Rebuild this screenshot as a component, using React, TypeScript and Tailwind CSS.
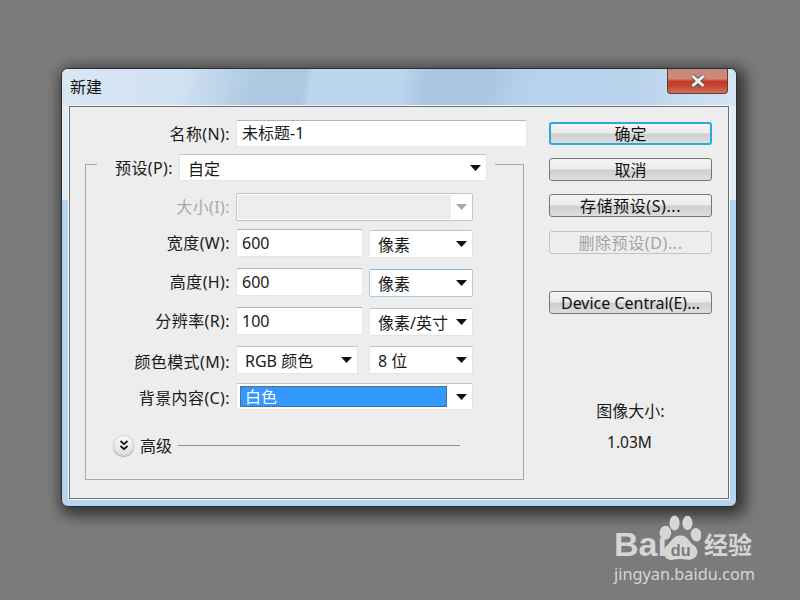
import React from 'react';

const FONT = 'font-["Noto_Sans","Noto_Sans_CJK_SC",sans-serif]';

const Arrow = ({ disabled = false }: { disabled?: boolean }) => (
  <svg width="11" height="6" viewBox="0 0 11 6" className="shrink-0">
    <path d="M0 0H11L5.5 6Z" fill={disabled ? '#a8a8a8' : '#111111'} />
  </svg>
);

const Label = ({ text, w, disabled = false, pt = '' }: { text: string; w: string; disabled?: boolean; pt?: string }) => (
  <span className={`${w} ${pt} shrink-0 self-center text-right whitespace-nowrap tracking-[0.4px] ${disabled ? 'text-[#a9a9a9]' : 'text-[#1a1a1a]'}`}>{text}</span>
);

const Input = ({ value, w, h = 'h-[28px]' }: { value: string; w: string; h?: string }) => (
  <div className={`${w} ${h} shrink-0 flex items-center pl-[5px] pb-[1px] bg-white rounded-[2px] border border-[#e6e6e6] border-t-[#b4b4b4]`}>
    {value}
  </div>
);

const Select = ({ value, w, focus = false, low = false, h = 'h-[28px]' }: { value: string; w: string; focus?: boolean; low?: boolean; h?: string }) => (
  <div
    className={`${w} ${h} ${low ? 'mt-[1px]' : ''} shrink-0 flex items-center justify-between pl-[8px] pr-[5px] bg-white rounded-[2px] border whitespace-nowrap ${
      focus ? 'border-[#a9cde6] border-t-[#84b4d6]' : 'border-[#e4e4e4] border-t-[#c4c4c4]'
    }`}
  >
    <span className="pt-[2px]">{value}</span>
    <Arrow />
  </div>
);

const Button = ({ text, mt, primary = false, disabled = false, spaced = false }: { text: string; mt: string; primary?: boolean; disabled?: boolean; spaced?: boolean }) => (
  <div
    className={`${mt} w-[163px] h-[23px] flex items-center justify-center rounded-[3px] whitespace-nowrap ${spaced ? 'tracking-[0.6px] pt-[1px]' : ''} ${
      disabled
        ? 'border border-[#c4c4c4] bg-[#ededed] text-[#a3a3a3]'
        : primary
        ? 'border-2 border-[#2fa9d9] bg-[linear-gradient(to_bottom,#f4f4f4_0%,#ececec_45%,#cfcfcf_55%,#dedede_100%)] text-[#111]'
        : 'border border-[#777] bg-[linear-gradient(to_bottom,#f4f4f4_0%,#ececec_45%,#cfcfcf_55%,#dedede_100%)] text-[#111]'
    }`}
  >
    {text}
  </div>
);

const Watermark = () => (
  <div className={`absolute left-[614px] top-[514px] w-[145px] flex flex-col text-[#d6d6d6] ${FONT}`}>
    <div className="flex items-end h-[47px]">
      <span className="font-['Liberation_Sans',sans-serif] font-bold text-[34px] leading-[34px] -mr-[8px]">Bai</span>
      <svg width="42" height="46" viewBox="186 45 124 135" className="shrink-0">
        <ellipse cx="205" cy="97" rx="17" ry="21" fill="currentColor" />
        <ellipse cx="232" cy="68" rx="15" ry="22" fill="currentColor" />
        <ellipse cx="270" cy="68" rx="15" ry="21" fill="currentColor" />
        <ellipse cx="296" cy="103" rx="16" ry="20" fill="currentColor" transform="rotate(-15 296 103)" />
        <path d="M250 105C270 105 275 125 290 135C308 150 300 178 272 177C258 176 244 172 228 177C204 180 192 156 206 138C222 124 228 105 250 105Z" fill="currentColor" />
        <text x="250" y="166" textAnchor="middle" fontSize="48" fontWeight="700" fill="#7b7b7b" fontFamily="Liberation Sans">du</text>
      </svg>
      <span className="ml-[3px] font-bold text-[24px] leading-[32px] whitespace-nowrap">经验</span>
    </div>
    <div className="mt-[2px] text-[16.3px] leading-[22px] whitespace-nowrap">jingyan.baidu.com</div>
  </div>
);

export default function App() {
  return (
    <div className={`relative w-[800px] h-[600px] overflow-hidden bg-[#7b7b7b] pl-[61px] pt-[68px] text-[16px] leading-[20px] ${FONT}`}>
      <div className="w-[676px] h-[439px] flex flex-col px-[7px] rounded-[7px] border border-[#2c2c2c] bg-[linear-gradient(to_bottom,#e4edf5_0%,#e4edf5_30%,#b6d4ef_30%,#b6d4ef_100%)] shadow-[4px_4px_14px_5px_rgba(0,0,0,0.55)]">
        {/* Title bar */}
        <div className="-mx-[7px] h-[37px] shrink-0 flex items-start justify-between pl-[8px] pr-[8px] rounded-t-[6px] bg-[linear-gradient(100deg,#d8e7f4_0%,#d0e1f2_18%,#adc8e0_29%,#adc8e0_36%,#bcd6ee_37%,#bcd6ee_50%,#a9c5e0_54%,#a9c5e0_63%,#b5d1ec_68%,#b9d3ec_85%,#d5e5f3_100%)]">
          <span className="mt-[8px] text-[#111]">新建</span>
          <div className="w-[61px] h-[25px] flex items-center justify-center rounded-b-[4px] border border-t-0 border-[#6a3a30] bg-[linear-gradient(to_bottom,#c08a80_0%,#d08a78_40%,#c23a26_52%,#c4452f_70%,#cd7460_100%)]">
            <svg width="16" height="14" viewBox="0 0 16 14">
              <path d="M2.5 2L13.5 12M13.5 2L2.5 12" stroke="#55575c" strokeWidth="4.6" />
              <path d="M2.5 2L13.5 12M13.5 2L2.5 12" stroke="#f2f2f2" strokeWidth="3" />
            </svg>
          </div>
        </div>

        {/* Panel */}
        <div className="w-[660px] h-[393px] flex border border-[#6e6e6e] bg-[#ededed] text-[#1a1a1a] pl-[15px] pt-[13px] shadow-[0_0_0_1px_#f2f7fc]">
          <div className="w-[443px] shrink-0 flex flex-col">
            <div className="flex gap-[6px] h-[27px]">
              <Label text="名称(N):" w="w-[145px]" />
              <Input value="未标题-1" w="w-[291px]" h="h-[27px]" />
            </div>

            {/* Group box */}
            <div className="mt-[17px] w-[439px] h-[316px] border border-[#a8a8a8] flex flex-col">
              <div className="-mt-[11px] ml-[11px] w-[398px] flex items-center gap-[6px] bg-[#ededed]">
                <Label text="预设(P):" w="w-[76px]" />
                <Select value="自定" w="w-[308px]" h="h-[27px]" />
              </div>

              <div className="mt-[12px] flex gap-[6px] h-[28px]">
                <Label text="大小(I):" w="w-[144px]" disabled />
                <div className="w-[237px] h-[28px] flex items-center justify-between pr-[5px] pl-[1px] rounded-[2px] border border-[#c4c4c4] bg-white">
                  <div className="w-[213px] h-[24px] bg-[#ededed]" />
                  <Arrow disabled />
                </div>
              </div>

              <div className="mt-[8px] flex gap-[6px] h-[28px]">
                <Label text="宽度(W):" w="w-[144px]" />
                <Input value="600" w="w-[127px]" />
                <Select value="像素" w="w-[104px]" low />
              </div>

              <div className="mt-[11px] flex gap-[6px] h-[28px]">
                <Label text="高度(H):" w="w-[144px]" />
                <Input value="600" w="w-[127px]" />
                <Select value="像素" w="w-[104px]" focus low />
              </div>

              <div className="mt-[11px] flex gap-[6px] h-[28px]">
                <Label text="分辨率(R):" w="w-[144px]" />
                <Input value="100" w="w-[127px]" />
                <Select value="像素/英寸" w="w-[104px]" low />
              </div>

              <div className="mt-[11px] flex gap-[6px] h-[28px]">
                <Label text="颜色模式(M):" w="w-[144px]" pt="pt-[3px]" />
                <Select value="RGB 颜色" w="w-[122px]" />
                <div className="ml-[5px]">
                  <Select value="8 位" w="w-[104px]" />
                </div>
              </div>

              <div className="mt-[9px] flex gap-[6px] h-[27px]">
                <Label text="背景内容(C):" w="w-[144px]" pt="pt-[2px]" />
                <div className="w-[237px] h-[27px] flex items-center justify-between pl-[3px] pr-[5px] bg-white rounded-[2px] border border-[#e4e4e4] border-t-[#c4c4c4]">
                  <div className="w-[207px] h-[21px] flex items-center pl-[4px] pt-[1px] bg-[#3399ff] text-white border border-dotted border-[#6b4a10]">白色</div>
                  <Arrow />
                </div>
              </div>

              <div className="mt-[25px] ml-[27px] flex items-center">
                <div className="w-[21px] h-[21px] shrink-0 flex items-center justify-center rounded-full border border-[#d0d0d0] bg-[linear-gradient(to_bottom,#fafafa,#dcdcdc)] shadow-[0_1px_1px_rgba(0,0,0,0.3)]">
                  <svg width="10" height="11" viewBox="0 0 10 11" fill="none" stroke="#111" strokeWidth="1.7">
                    <path d="M1.5 1L5 4.2L8.5 1M1.5 6L5 9.2L8.5 6" />
                  </svg>
                </div>
                <span className="ml-[6px]">高级</span>
                <div className="ml-[6px] w-[282px] h-px bg-[#8f8f8f]" />
              </div>
            </div>
          </div>

          {/* Right column */}
          <div className="ml-[21px] w-[163px] flex flex-col items-center">
            <Button text="确定" mt="mt-[2px]" primary />
            <Button text="取消" mt="mt-[13px]" />
            <Button text="存储预设(S)..." mt="mt-[13px]" spaced />
            <Button text="删除预设(D)..." mt="mt-[14px]" disabled spaced />
            <Button text="Device Central(E)..." mt="mt-[37px]" />
            <div className="mt-[87px] whitespace-nowrap">图像大小:</div>
            <div className="mt-[11px] text-[15.5px] -ml-[2px]">1.03M</div>
          </div>
        </div>
      </div>
      <Watermark />
    </div>
  );
}
